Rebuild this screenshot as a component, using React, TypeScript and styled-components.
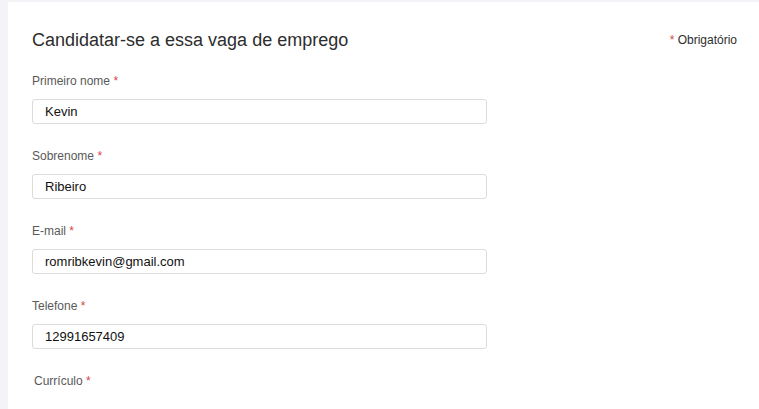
import React from "react";
import styled, { createGlobalStyle } from "styled-components";

const Global = createGlobalStyle`
  html, body { margin: 0; padding: 0; background: #f3f3f8; }
  body { font-family: "Liberation Sans", Arial, sans-serif; }
`;

const Page = styled.div`
  display: flex;
  padding-left: 8px;
  height: 409px;
  overflow: hidden;
  background: #f3f3f8;
`;

const Card = styled.div`
  flex: 1;
  margin-top: 2px;
  background: #fff;
  padding: 26px 22px 0 24px;
`;

const Header = styled.div`
  display: flex;
  justify-content: space-between;
  align-items: center;
  margin-bottom: 22px;
`;

const Title = styled.h1`
  margin: 0;
  font-size: 18px;
  font-weight: 400;
  color: #2d2d2d;
  line-height: 24px;
`;

const Required = styled.span`
  font-size: 12px;
  color: #2d2d2d;
  line-height: 14px;
  margin-top: -1px;
`;

const Star = styled.span`
  color: #d4474a;
`;

const Field = styled.div<{ $indent?: number }>`
  display: flex;
  flex-direction: column;
  margin-bottom: 25px;
  padding-left: ${(p) => p.$indent ?? 0}px;
`;

const Label = styled.label`
  font-size: 12px;
  color: #595959;
  line-height: 14px;
  margin-bottom: 11px;
`;

const Input = styled.input`
  box-sizing: border-box;
  width: 455px;
  height: 25px;
  border: 1px solid #dcdcdc;
  border-radius: 3px;
  padding: 0 12px;
  font-family: "Liberation Sans", Arial, sans-serif;
  font-size: 13px;
  color: #111;
  outline: none;
`;

const fields = [
  { label: "Primeiro nome", value: "Kevin" },
  { label: "Sobrenome", value: "Ribeiro" },
  { label: "E-mail", value: "romribkevin@gmail.com" },
  { label: "Telefone", value: "12991657409" },
];

export default function App() {
  return (
    <>
      <Global />
      <Page>
        <Card>
          <Header>
            <Title>Candidatar-se a essa vaga de emprego</Title>
            <Required>
              <Star>*</Star> Obrigatório
            </Required>
          </Header>
          {fields.map((f) => (
            <Field key={f.label}>
              <Label>
                {f.label} <Star>*</Star>
              </Label>
              <Input defaultValue={f.value} readOnly />
            </Field>
          ))}
          <Field $indent={2}>
            <Label>
              Currículo <Star>*</Star>
            </Label>
          </Field>
        </Card>
      </Page>
    </>
  );
}
